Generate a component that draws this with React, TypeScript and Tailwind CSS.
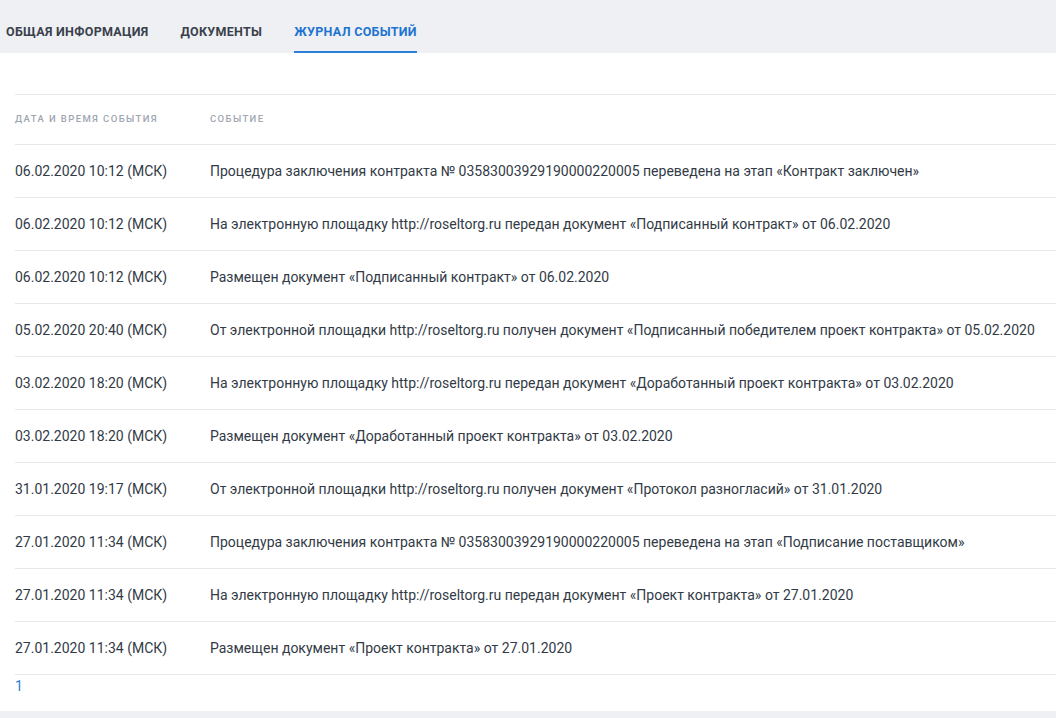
const rows: [string, string][] = [
  ['06.02.2020 10:12 (МСК)', 'Процедура заключения контракта № 03583003929190000220005 переведена на этап «Контракт заключен»'],
  ['06.02.2020 10:12 (МСК)', 'На электронную площадку http://roseltorg.ru передан документ «Подписанный контракт» от 06.02.2020'],
  ['06.02.2020 10:12 (МСК)', 'Размещен документ «Подписанный контракт» от 06.02.2020'],
  ['05.02.2020 20:40 (МСК)', 'От электронной площадки http://roseltorg.ru получен документ «Подписанный победителем проект контракта» от 05.02.2020'],
  ['03.02.2020 18:20 (МСК)', 'На электронную площадку http://roseltorg.ru передан документ «Доработанный проект контракта» от 03.02.2020'],
  ['03.02.2020 18:20 (МСК)', 'Размещен документ «Доработанный проект контракта» от 03.02.2020'],
  ['31.01.2020 19:17 (МСК)', 'От электронной площадки http://roseltorg.ru получен документ «Протокол разногласий» от 31.01.2020'],
  ['27.01.2020 11:34 (МСК)', 'Процедура заключения контракта № 03583003929190000220005 переведена на этап «Подписание поставщиком»'],
  ['27.01.2020 11:34 (МСК)', 'На электронную площадку http://roseltorg.ru передан документ «Проект контракта» от 27.01.2020'],
  ['27.01.2020 11:34 (МСК)', 'Размещен документ «Проект контракта» от 27.01.2020'],
];

const tabs = ['ОБЩАЯ ИНФОРМАЦИЯ', 'ДОКУМЕНТЫ', 'ЖУРНАЛ СОБЫТИЙ'];

export default function App() {
  return (
    <div className="w-[1056px] h-[718px] overflow-hidden bg-white font-['Roboto',sans-serif] text-[#323a46]">
      <div className="h-[53px] bg-[#eef0f3] flex items-end gap-8 pl-[6px]">
        {tabs.map((t, i) => (
          <div
            key={t}
            className={
              'h-[53px] flex items-center pt-[14px] text-[12.5px] font-bold tracking-[0.3px] border-b-2 ' +
              (i === 2 ? 'text-[#1e74d0] border-[#2a7fd6]' : 'text-[#3a404c] border-transparent')
            }
          >
            {t}
          </div>
        ))}
      </div>

      <div className="pl-[15px] pt-[41px]">
        <div className="border-t border-[#e6e8eb]">
          <div className="h-[49px] flex items-center text-[9.5px] tracking-[1.4px] text-[#a0a6b1] font-medium">
            <div className="w-[195px]">ДАТА И ВРЕМЯ СОБЫТИЯ</div>
            <div>СОБЫТИЕ</div>
          </div>
          {rows.map(([d, e], i) => (
            <div key={i} className="h-[53px] flex items-center border-t border-[#e6e8eb] text-[14px]">
              <div className="w-[195px] shrink-0">{d}</div>
              <div className="whitespace-nowrap">{e}</div>
            </div>
          ))}
          <div className="border-t border-[#e6e8eb] h-[37px] text-[14px] text-[#2a7fd6] leading-[22px]">1</div>
        </div>
      </div>
      <div className="h-[20px] bg-[#eef0f3]" />
    </div>
  );
}
